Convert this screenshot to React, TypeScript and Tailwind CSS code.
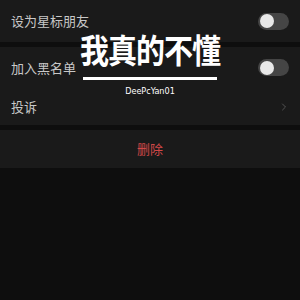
import { ChevronRight } from "lucide-react";

function Toggle() {
  return (
    <div className="w-[31px] h-[17px] rounded-full bg-[#454545] flex items-center px-[2px]">
      <div className="w-[14px] h-[14px] rounded-full bg-[#e8e8e8]" />
    </div>
  );
}

export default function App() {
  return (
    <main
      className="relative w-[300px] h-[300px] bg-[#0e0e0e] overflow-hidden"
      style={{ fontFamily: '"Noto Sans CJK SC", "Noto Sans", sans-serif' }}
    >
      {/* settings rows */}
      <div className="flex flex-col gap-[5px]">
        <div className="h-[42px] bg-[#1a1a1a] flex items-center justify-between pl-[11px] pr-[11px]">
          <span className="text-[13px] text-[#c8c8c8]">设为星标朋友</span>
          <Toggle />
        </div>
        <div className="bg-[#1a1a1a] flex flex-col">
          <div className="h-[41px] flex items-center justify-between pl-[11px] pr-[11px]">
            <span className="text-[13px] text-[#c8c8c8]">加入黑名单</span>
            <Toggle />
          </div>
          <div className="h-[37px] flex items-center justify-between pl-[11px] pr-[10px]">
            <span className="text-[13px] text-[#c8c8c8]">投诉</span>
            <ChevronRight size={12} strokeWidth={1.5} className="text-[#666]" />
          </div>
        </div>
        <div className="h-[38px] bg-[#1a1a1a] flex items-center justify-center">
          <span className="text-[13px] text-[#d04848]">删除</span>
        </div>
      </div>

      {/* watermark overlay */}
      <div className="absolute left-0 right-0 top-[30px] flex flex-col items-center">
        <div className="text-[29px] leading-[36px] font-semibold text-white tracking-[-1px] scale-y-[1.15]">
          我真的不懂
        </div>
        <div className="mt-[11px] w-[134px] h-[3px] bg-white" />
        <div
          className="mt-[6px] text-[9px] leading-[10px] text-white"
          style={{ fontFamily: '"DejaVu Sans Condensed", "DejaVu Sans", sans-serif' }}
        >
          DeePcYan01
        </div>
      </div>
    </main>
  );
}
